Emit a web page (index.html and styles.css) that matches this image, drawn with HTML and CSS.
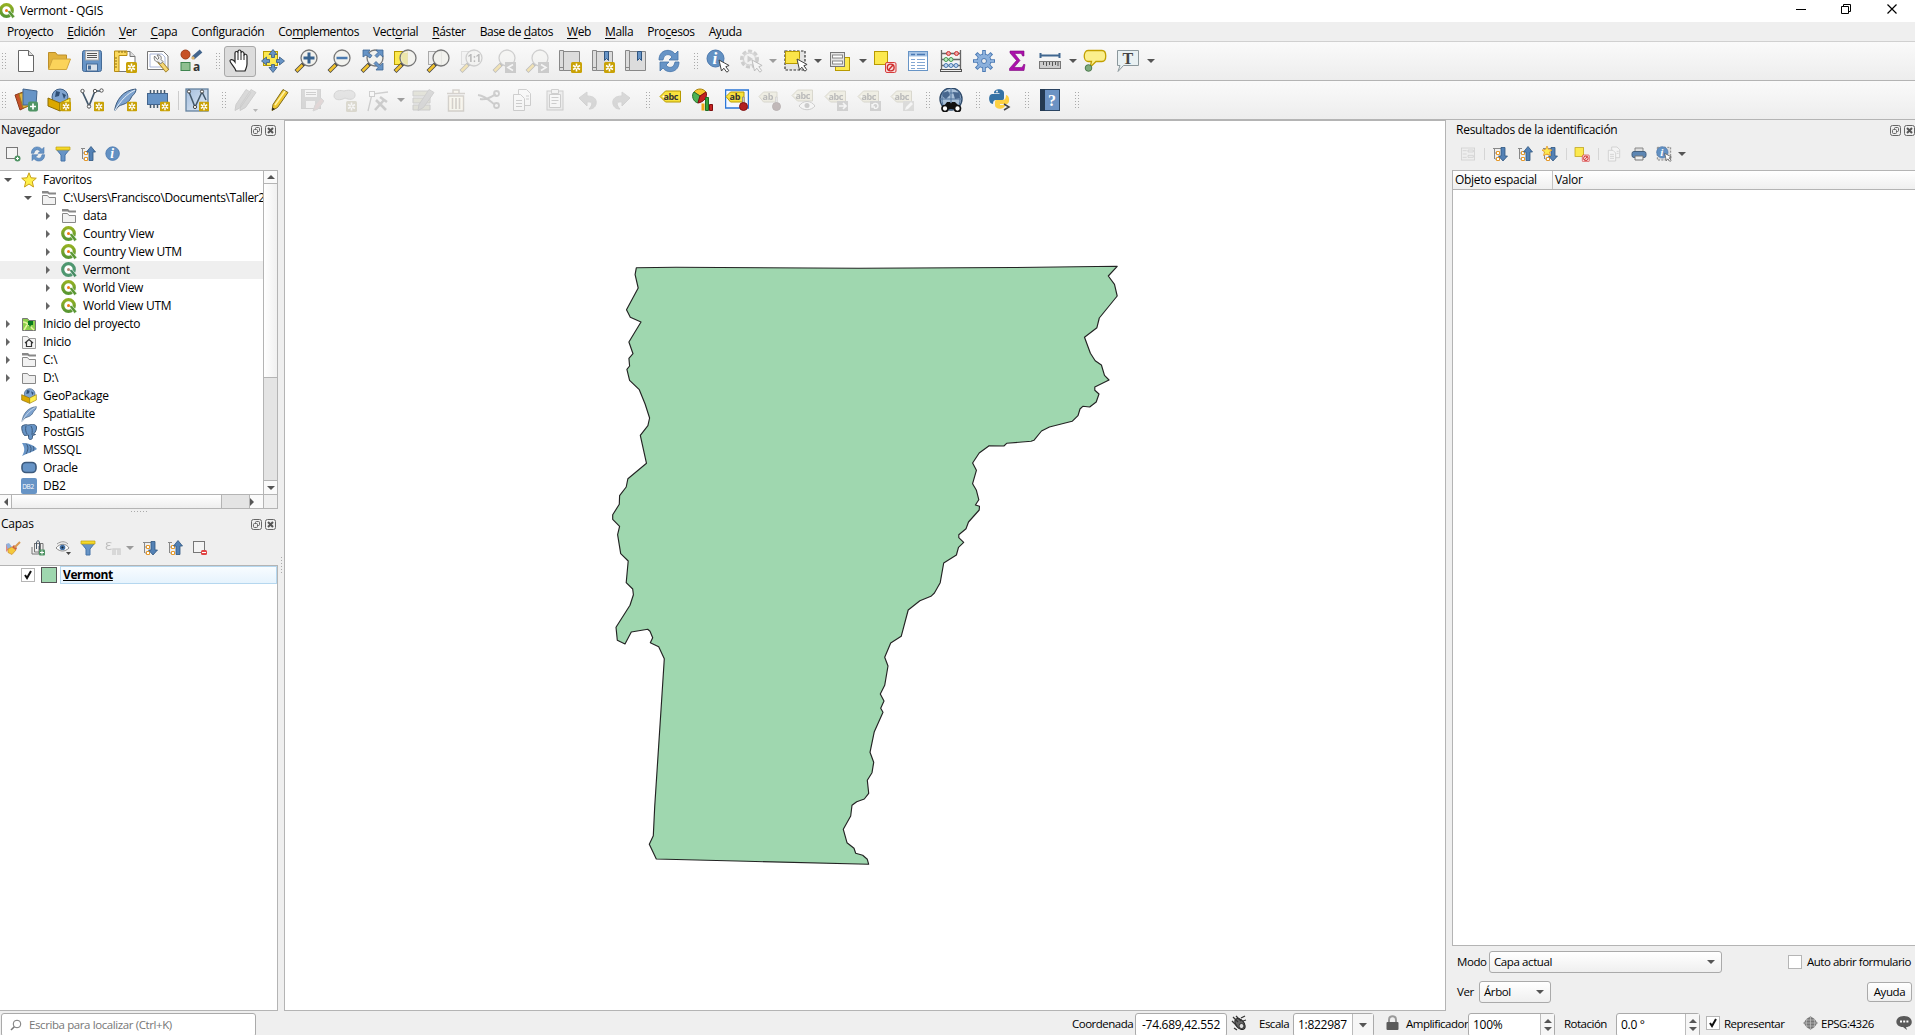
FILE: index.html
```html
<!DOCTYPE html>
<html lang="es">
<head>
<meta charset="utf-8">
<title>Vermont - QGIS</title>
<link rel="stylesheet" href="styles.css">
</head>
<body>
<svg class="defs" width="0" height="0">
<defs>
<linearGradient id="gBlue" x1="0" y1="0" x2="1" y2="1"><stop offset="0" stop-color="#a5bfdf"/><stop offset="1" stop-color="#dfe9f3"/></linearGradient>
<linearGradient id="gQ" x1="0" y1="0" x2="0" y2="1"><stop offset="0" stop-color="#93b023"/><stop offset="1" stop-color="#589632"/></linearGradient>
</defs>
<symbol id="badge" viewBox="0 0 11 11"><rect width="11" height="11" rx="1.5" fill="#c9a206"/><path d="M5.500 1.500v8M2 3.500l7 4M9 3.500l-7 4" stroke="#fff" stroke-width="1.600"/><circle cx="5.500" cy="5.500" r="1" fill="#c9a206"/></symbol>
<symbol id="glass" viewBox="0 0 24 24"><path d="M10 14.500L2 22.500" stroke="#444" stroke-width="4"/><path d="M8.500 16L2.500 22" stroke="#f2c32e" stroke-width="2.500"/><circle cx="15" cy="9" r="8" fill="#f1f1ec" fill-opacity=".85" stroke="#777" stroke-width="1.300"/></symbol>
<symbol id="cursor" viewBox="0 0 12 14"><path d="M1 1l2.500 11 2.300-2.800 3 4 2-1.500-3-4 3.300-1.200z" fill="#fff" stroke="#444"/></symbol>
<symbol id="dd" viewBox="0 0 8 5"><path d="M0 0h8L4 4.500z" fill="#555"/></symbol>
<symbol id="new" viewBox="0 0 24 24"><path d="M4.500 1.500h10l5 5v16h-15z" fill="#fff" stroke="#666"/><path d="M14.500 1.500v5h5" fill="#ddd" stroke="#666"/></symbol>
<symbol id="open" viewBox="0 0 24 24"><path d="M1.500 20V3.500h7l2 2.500h9v4" fill="#e2b33d" stroke="#bd8f2a"/><path d="M1.500 20.500l4-10.500h18l-4 10.500z" fill="#fbd35a" stroke="#d1a63c"/></symbol>
<symbol id="save" viewBox="0 0 24 24"><rect x="2.500" y="1.500" width="19" height="21" rx="2" fill="#6794c6" stroke="#456b97"/><rect x="5.500" y="2" width="13" height="9" fill="#f3f3f3" stroke="#aaa"/><path d="M7 4.500h10M7 6.500h10M7 8.500h10" stroke="#555"/><rect x="6.500" y="15" width="11" height="7" fill="#d9e1ea" stroke="#456b97"/><path d="M8 16.500h3v4H8z" fill="#456b97"/></symbol>
<symbol id="layout" viewBox="0 0 24 24"><path d="M5 2.500h12l5 5v15H5z" fill="#fff" stroke="#777"/><path d="M17 2.500v5h5" fill="#ddd" stroke="#777"/><path d="M1.500 2h12.500v4.500H6V22.500H1.500z" fill="#fbd95d" stroke="#b68b12"/><path d="M2 9h2M2 12h2M2 15h2M2 18h2M6 2v2M9 2v2M12 2v2" stroke="#8a6b10"/></symbol>
<symbol id="manager" viewBox="0 0 24 24"><path d="M1.500 2.500h16l4.500 4.500v13.500H1.500z" fill="#fff" stroke="#777"/><path d="M4 5h12l3 3v10H4z" fill="#fff" stroke="#a8b5d8"/><path d="M13 12l8.500 10" stroke="#9b7b1d" stroke-width="4.500"/><path d="M14.500 13.500l6.500 8" stroke="#f6d775" stroke-width="3"/><path d="M8.500 7c-1 4 1 6 4 6l2 2 2.500-2.500-2-2c1-3-1-5-4-4.500l2 3-1.500 1.500z" fill="#eee" stroke="#777"/></symbol>
<symbol id="style" viewBox="0 0 24 24"><circle cx="6.500" cy="5.500" r="4.500" fill="#c75227" stroke="#9d3d1a"/><path d="M14 9l8-7" stroke="#43658d" stroke-width="4"/><path d="M13 10l2-2" stroke="#deb66f" stroke-width="3"/><rect x="2" y="13.500" width="9" height="8" fill="#8fbf90" stroke="#408550"/><text x="14" y="22" font-family="Open Sans" font-size="12" fill="#333">a</text></symbol>
<symbol id="hand" viewBox="0 0 24 24"><path d="M8 22c-1-4-6-8-6-10s3-2 5 1V4c0-2 3-2 3 0V2.500c0-2 3-2 3 0V4c0-2 3-1.500 3 .5v2c0-2 3-1.500 3 .5v8c0 3-1 4-2 7z" fill="#fff" stroke="#222" stroke-width="1.200"/><path d="M10 4v7M13 4v7M16 6v5" stroke="#222"/></symbol>
<symbol id="pansel" viewBox="0 0 24 24"><rect x="2.500" y="2.500" width="14" height="14" fill="#fce94f" stroke="#b89a00"/><path d="M12 .5l4 5h-2.500v3h-3v-3H8zM23.500 12l-5 4v-2.500h-3v-3h3V8zM12 23.500l-4-5h2.500v-3h3v3H16zM.5 12l5-4v2.500h3v3h-3V16z" fill="#6794c6" stroke="#385a80" stroke-width=".8"/></symbol>
<symbol id="zin" viewBox="0 0 24 24"><use href="#glass"/><path d="M15 3.500v11M9.500 9h11" stroke="#38638f" stroke-width="3"/></symbol>
<symbol id="zout" viewBox="0 0 24 24"><use href="#glass"/><path d="M9.500 9h11" stroke="#4a7ab0" stroke-width="2.500"/></symbol>
<symbol id="zfull" viewBox="0 0 24 24"><use href="#glass"/><path d="M3 1h7L8 3.500l4 3-2 2.500-4-3L3 8zM23 1h-7l2 2.500-3 3 2 2 3-3L23 8zM23 21h-7l2-2.500-4-4 2-2 4 4 3-2.500z" fill="#6794c6" stroke="#3d6492" stroke-width=".8"/></symbol>
<symbol id="zsel" viewBox="0 0 24 24"><rect x="1.500" y="2.500" width="13" height="13" fill="#fce94f" stroke="#b89a00"/><use href="#glass"/><path d="M9 4h5.500v11.500C9 15 7 9 9 4z" fill="#e8e08d" opacity=".6"/></symbol>
<symbol id="zlay" viewBox="0 0 24 24"><rect x="2.500" y="2.500" width="13" height="13" fill="#eee" stroke="#aaa"/><use href="#glass"/></symbol>
<symbol id="znat" viewBox="0 0 24 24"><use href="#zlay"/><text x="8.500" y="13" font-family="Open Sans" font-weight="700" font-size="10" fill="#333">1:1</text></symbol>
<symbol id="zlast" viewBox="0 0 24 24"><use href="#glass"/><rect x="13" y="13" width="11" height="11" fill="#777"/><path d="M21 15.500l-5 3 5 3" fill="none" stroke="#fff" stroke-width="1.600"/></symbol>
<symbol id="znext" viewBox="0 0 24 24"><use href="#glass"/><rect x="13" y="13" width="11" height="11" fill="#777"/><path d="M16 15.500l5 3-5 3" fill="none" stroke="#fff" stroke-width="1.600"/></symbol>
<symbol id="map" viewBox="0 0 24 24"><path d="M1.500 1.500h4v20h-4zM5.500 2.500h16v19h-16z" fill="#dcdcdc" stroke="#888"/><path d="M1.500 18.500h4" stroke="#888"/></symbol>
<symbol id="bm" viewBox="0 0 24 24"><use href="#map"/><path d="M13.500 2.500h4v9l-2-2-2 2z" fill="#6794c6" stroke="#2f5580"/></symbol>
<symbol id="mapnew" viewBox="0 0 24 24"><use href="#map"/><use href="#badge" x="13" y="13" width="11" height="11"/></symbol>
<symbol id="bmnew" viewBox="0 0 24 24"><use href="#bm"/><use href="#badge" x="13" y="13" width="11" height="11"/></symbol>
<symbol id="refresh" viewBox="0 0 24 24"><path d="M2 11C2 0 14-1 18 5l3-3v9h-9l3-3C12 4 7 5 6 11zM22 13c0 11-12 12-16 6l-3 3v-9h9l-3 3c3 4 8 3 9-3z" fill="#6794c6" stroke="#4573a8" stroke-width=".8"/></symbol>
<symbol id="info" viewBox="0 0 24 24"><circle cx="9.500" cy="9.500" r="8.500" fill="#6391c3" stroke="#4a77ad"/><text x="6.500" y="15" font-family="Liberation Serif" font-style="italic" font-weight="700" font-size="17" fill="#fff">i</text></symbol>
<symbol id="identify" viewBox="0 0 24 24"><use href="#info"/><use href="#cursor" x="12" y="10" width="12" height="14"/></symbol>
<symbol id="gear" viewBox="0 0 24 24"><path d="M12 1v22M1 12h22M4.200 4.200l15.600 15.600M19.800 4.200L4.200 19.800" stroke="#4b7ab4" stroke-width="3.600"/><circle cx="12" cy="12" r="7" fill="#8bb0dc" stroke="#4b7ab4"/><path d="M12 2v20M2 12h20M5 5l14 14M19 5L5 19" stroke="#8bb0dc" stroke-width="2"/><circle cx="12" cy="12" r="2.500" fill="#eee" stroke="#4b7ab4"/></symbol>
<symbol id="action" viewBox="0 0 24 24"><circle cx="10.500" cy="10" r="8" fill="#ddd" stroke="#777" stroke-width="3" stroke-dasharray="4 2"/><circle cx="10.500" cy="10" r="6" fill="#eee" stroke="#777"/><path d="M8.500 6.500v7l5.500-3.500z" fill="#777"/><use href="#cursor" x="12" y="10" width="12" height="14"/></symbol>
<symbol id="select" viewBox="0 0 24 24"><rect x="1" y="2" width="20" height="19" fill="#e4e4e4" stroke="#333" stroke-width="1.200" stroke-dasharray="2.500 1.500"/><path d="M1.500 2.500h14v7l-2 5h-12z" fill="#fbe54a" stroke="#b89a00"/><use href="#cursor" x="12" y="9" width="12" height="14"/></symbol>
<symbol id="form" viewBox="0 0 24 24"><rect x="6.500" y="8.500" width="14" height="13" fill="#fce94f" stroke="#b89a00"/><rect x="1.500" y="3.500" width="14" height="14" fill="#e5e5e5" stroke="#777"/><rect x="3.500" y="6" width="10" height="3" fill="#fff" stroke="#888"/><rect x="3.500" y="12" width="10" height="3" fill="#fff" stroke="#888"/></symbol>
<symbol id="desel" viewBox="0 0 24 24"><rect x="1.500" y="2.500" width="13" height="13" fill="#fce94f" stroke="#b89a00"/><rect x="12.500" y="13.500" width="10.500" height="10" rx="1.500" fill="#f7dada" stroke="#d73c3c"/><circle cx="17.700" cy="18.500" r="3.400" fill="none" stroke="#cc2b2b" stroke-width="1.400"/><path d="M15.500 21l4.500-5" stroke="#cc2b2b" stroke-width="1.400"/></symbol>
<symbol id="table" viewBox="0 0 24 24"><rect x="2.500" y="2.500" width="19" height="19" fill="#fff" stroke="#6794c6"/><path d="M3 3h18v4.500H3z" fill="#a9c6e6"/><path d="M5 5.500h4M11 5.500h8" stroke="#4b7ab4" stroke-width="1.500"/><path d="M5 10.500h4M11 10.500h8M5 13.500h4M11 13.500h8M5 16.500h4M11 16.500h8M5 19.500h4M11 19.500h8" stroke="#83a7d2" stroke-width="1.200"/></symbol>
<symbol id="abacus" viewBox="0 0 24 24"><path d="M2 4.500h20M2 10.500h20M2 16.500h20M2.500 1v20M21.500 1v20" stroke="#666" stroke-width="1.300"/><rect x="1.500" y="20.500" width="21" height="2" fill="#eee" stroke="#555"/><g fill="#f0a3a3" stroke="#c33"><circle cx="9.500" cy="4.500" r="2"/><circle cx="17.500" cy="4.500" r="2"/></g><g fill="#b9ecc0" stroke="#4a9a56"><circle cx="7" cy="10.500" r="2"/><circle cx="12" cy="10.500" r="2"/></g><g fill="#c1d8f0" stroke="#4b7ab4"><circle cx="7" cy="16.500" r="2"/><circle cx="12" cy="16.500" r="2"/><circle cx="17" cy="16.500" r="2"/></g></symbol>
<symbol id="sigma" viewBox="0 0 24 24"><path d="M5 2h14v5h-1.500c-.5-2-1-2.500-3-2.500h-5l5.500 7-6 7h6c2 0 3-.5 3.500-3H20l-1 6H4.500v-2l7-8L5 4z" fill="#ab0fab" stroke="#7d077d" stroke-width=".6"/></symbol>
<symbol id="ruler" viewBox="0 0 24 24"><path d="M2 6.500h20M2.500 4v5M21.500 4v5" stroke="#3f668f" stroke-width="2"/><rect x="1.500" y="12.500" width="21" height="7" fill="#ccc" stroke="#777"/><path d="M5.500 13v3M8.500 13v4M11.500 13v3M14.500 13v4M17.500 13v3M20 13v4" stroke="#555"/></symbol>
<symbol id="tip" viewBox="0 0 24 24"><path d="M5 1.500h14c5 0 5 11 0 11h-6l-6 6 1.500-6H5c-5 0-5-11 0-11z" fill="#fbef8c" stroke="#c2a000" stroke-width="1.300"/><circle cx="5.500" cy="19" r="3.300" fill="#7fab7d" stroke="#4c7a4e"/></symbol>
<symbol id="tnote" viewBox="0 0 24 24"><path d="M1.500 1.500h21v15h-15L2 22.500l2-6H1.500z" fill="#e9f1f3" stroke="#8b989c"/><text x="6.500" y="14.500" font-family="Liberation Serif" font-weight="700" font-size="16" fill="#444">T</text></symbol>
<symbol id="ds" viewBox="0 0 24 24"><path d="M1 7l8-3 5 14-8 4z" fill="#c75227" stroke="#8c3c1e"/><path d="M5 6l9-3 4 14-9 3z" fill="#e2b541" stroke="#9f7a1c"/><path d="M9 1l14 2-1 14H9z" fill="#6794c6" stroke="#43658d"/><rect x="14" y="13.500" width="10" height="10" rx="2" fill="#4f9464"/><path d="M19 15.500v6M16 18.500h6" stroke="#fff" stroke-width="1.700"/></symbol>
<symbol id="gpkg" viewBox="0 0 24 24"><circle cx="13" cy="9" r="8" fill="#7fa4d0" stroke="#3e5f85"/><path d="M9 3l4 1-1 4-4 1zM15 5l4 2-2 4z" fill="#2f4f75"/><path d="M1 10l12 5v8L1 18z" fill="#dba800" stroke="#8d6d05"/><path d="M13 15l10-5v8l-10 5z" fill="#fff04f" stroke="#9f8105"/></symbol>
<symbol id="gpkgnew" viewBox="0 0 24 24"><use href="#gpkg"/><use href="#badge" x="14" y="13.500" width="10" height="10"/></symbol>
<symbol id="shp" viewBox="0 0 24 24"><path d="M2.500 4L9 18 15 3h7" fill="none" stroke="#43586b" stroke-width="1.700"/><g fill="#fff" stroke="#555"><circle cx="2.500" cy="3" r="1.700"/><circle cx="9" cy="18.500" r="1.700"/><circle cx="15" cy="3" r="1.700"/><circle cx="21.500" cy="2.500" r="1.700"/></g></symbol>
<symbol id="shpnew" viewBox="0 0 24 24"><use href="#shp"/><use href="#badge" x="14" y="13.500" width="10" height="10"/></symbol>
<symbol id="feather" viewBox="0 0 24 24"><path d="M1.500 23C3 12 10 2 23 1c0 5-4 6-5 9-3 6-8 6-12 8z" fill="#7ea3cf" stroke="#3c5a7d"/><path d="M1.500 23C8 12 14 6 22 2" fill="none" stroke="#e8f0f8"/></symbol>
<symbol id="featnew" viewBox="0 0 24 24"><use href="#feather"/><use href="#badge" x="14" y="13.500" width="10" height="10"/></symbol>
<symbol id="chip" viewBox="0 0 24 24"><path d="M4.500 2v18M8 2v18M11.500 2v18M15 2v18M18.500 2v18" stroke="#43586b" stroke-width="1.500"/><rect x="1.500" y="5.500" width="20" height="11" fill="#6794c6" stroke="#43658d"/><use href="#badge" x="14" y="13.500" width="10" height="10"/></symbol>
<symbol id="virt" viewBox="0 0 24 24"><rect x="1" y="1" width="22" height="22" fill="url(#gBlue)" stroke="#64829f" stroke-width="1.300"/><path d="M4 4l6 15 7-15 4 8" fill="none" stroke="#43586b" stroke-width="1.500"/><g fill="#fff" stroke="#444"><circle cx="4" cy="3.500" r="1.600"/><circle cx="10" cy="19" r="1.600"/><circle cx="17" cy="3.500" r="1.600"/></g><use href="#badge" x="14" y="13.500" width="10" height="10"/></symbol>
<symbol id="pencil" viewBox="0 0 24 24"><path d="M5 22.500l1-6L16 1.500l5 3L10.500 19.500z" fill="#f0c830" stroke="#7d6a1c"/><path d="M8 17L18 3" stroke="#fff3a8" stroke-width="1.500"/><path d="M5 22.500l.5-3 2.500 1.500z" fill="#222"/></symbol>
<symbol id="gpencil" viewBox="0 0 24 24"><path d="M5 22.500l1-6L16 1.500l5 3L10.500 19.500z" fill="#999" stroke="#777"/></symbol>
<symbol id="saveed" viewBox="0 0 24 24"><rect x="1.500" y="1.500" width="19" height="19" fill="#999" stroke="#888"/><rect x="5" y="2" width="12" height="7" fill="#f3f3f3"/><path d="M6 4.500h10M6 6.500h10" stroke="#777"/><rect x="6" y="13" width="9" height="7" fill="#eee"/><path d="M13 23l2-6 6-7 3 3-6 8z" fill="#b99" stroke="#999"/></symbol>
<symbol id="addfeat" viewBox="0 0 24 24"><path d="M1 8c0-6 7-6 10-5 6-2 12 0 11 5-1 4-6 4-10 2-5 3-11 2-11-2z" fill="#bbb" stroke="#888"/><use href="#badge" x="13" y="13" width="11" height="11"/></symbol>
<symbol id="vertex" viewBox="0 0 24 24"><path d="M2 23L6 6l16-2" fill="none" stroke="#777" stroke-width="1.300"/><rect x="3.500" y="3.500" width="5" height="5" fill="#fff" stroke="#777"/><path d="M9 22l9-10M10 12l10 10M14 9l7 5" stroke="#777" stroke-width="2.600"/></symbol>
<symbol id="multi" viewBox="0 0 24 24"><path d="M2 3h17v5H2zM2 10h17v5H2zM2 17h17v5H2z" fill="#b9b99c" stroke="#777"/><use href="#gpencil" x="2"/></symbol>
<symbol id="trash" viewBox="0 0 24 24"><path d="M4.500 8h15v15h-15zM3 5.500h18M9 5V2h6v3" fill="#eee" stroke="#777" stroke-width="1.500"/><path d="M8.500 10v11M12 10v11M15.500 10v11" stroke="#777" stroke-width="1.700"/></symbol>
<symbol id="cut" viewBox="0 0 24 24"><path d="M1 7c7 1 11 5 16 9M3 11c7 1 11-2 16-5" fill="none" stroke="#777" stroke-width="2"/><circle cx="19.500" cy="5.500" r="2.500" fill="none" stroke="#777" stroke-width="1.800"/><circle cx="19.500" cy="17.500" r="2.500" fill="none" stroke="#777" stroke-width="1.800"/></symbol>
<symbol id="copy" viewBox="0 0 24 24"><path d="M8.500 1.500h8l4 4v12h-12z" fill="#fff" stroke="#777"/><path d="M3.500 6.500h7l4 4v12h-11z" fill="#fff" stroke="#777"/><path d="M6 12.500h6M6 15.500h6M6 18.500h6M16 8h3M16 11h3" stroke="#777"/></symbol>
<symbol id="paste" viewBox="0 0 24 24"><rect x="4" y="3" width="16" height="19" fill="#ddd" stroke="#777"/><path d="M6.500 6.500h11v13h-11z" fill="#fff" stroke="#777"/><path d="M8.500 1.500h7v4h-7z" fill="#eee" stroke="#777"/><path d="M8.500 9.500h7M8.500 12.500h7M8.500 15.500h5" stroke="#777"/></symbol>
<symbol id="undo" viewBox="0 0 24 24"><path d="M3 10l8-6v4c7 0 10 3 9 8-1 4-4 5-7 5 4-4 4-8-2-7v4z" fill="#999" stroke="#888"/></symbol>
<symbol id="tag" viewBox="0 0 24 24"><path d="M1 9.500L6.500 4h15v11h-15z" fill="#f8e23c" stroke="#b79a00"/><circle cx="4.500" cy="9.500" r="1" fill="#fff"/></symbol>
<symbol id="abc" viewBox="0 0 24 24"><use href="#tag"/><text x="4.500" y="13" font-family="Open Sans" font-weight="700" font-size="9" letter-spacing="-.4" fill="#333">abc</text></symbol>
<symbol id="chart" viewBox="0 0 24 24"><path d="M8 8L2 4c3-4 9-4 12 0z" fill="#f6c62c" stroke="#a8840d"/><path d="M8 8L2 4c-3 3-1 10 4 11z" fill="#4eb254" stroke="#22702a"/><path d="M8 8l6-4c2 5-2 10-8 11z" fill="#c42222" stroke="#7e0f0f"/><path d="M9.500 15.500h3v7h-3z" fill="#f0a818"/><path d="M13.500 9.500h3v13h-3z" fill="#37a33d" stroke="#1f6e25"/><path d="M17.500 16.500h3v6h-3z" fill="#c42222" stroke="#7e0f0f"/></symbol>
<symbol id="pin" viewBox="0 0 24 24"><path d="M1 8.500L5.500 4H19v10H5.500z" fill="#f8e23c" stroke="#b79a00"/><text x="4.500" y="12" font-family="Open Sans" font-weight="700" font-size="9" fill="#333">ab</text><path d="M17.500 9h1.500v9h-1.500z" fill="#eee" stroke="#777" stroke-width=".7"/><circle cx="18.500" cy="18.500" r="4" fill="#b32020" stroke="#7f1515"/></symbol>
<symbol id="lpin" viewBox="0 0 24 24"><rect x=".5" y="2" width="23" height="18" fill="#f4f8ff" stroke="#2a76d8" stroke-width="1.500"/><use href="#pin"/></symbol>
<symbol id="leye" viewBox="0 0 24 24"><use href="#abc" y="-2"/><path d="M8 18c4-6 12-6 16 0-4 5-12 5-16 0z" fill="#fff" stroke="#777"/><circle cx="16" cy="17.500" r="2.500" fill="#777"/></symbol>
<symbol id="lmove" viewBox="0 0 24 24"><use href="#abc" y="-1"/><rect x="13" y="13" width="11" height="10" fill="#888"/><path d="M15 18h7M19 15l3 3-3 3" fill="none" stroke="#fff" stroke-width="1.700"/></symbol>
<symbol id="lrot" viewBox="0 0 24 24"><use href="#abc" y="-1"/><rect x="13" y="13" width="11" height="10" fill="#888"/><path d="M16 18c-1-3 5-4 5 0 0 2-2 3-4 2M15 16v3h3" fill="none" stroke="#fff" stroke-width="1.400"/></symbol>
<symbol id="ledit" viewBox="0 0 24 24"><use href="#abc" y="-1"/><rect x="13" y="13" width="11" height="10" fill="#aa9"/><path d="M15 22l1-3 5-5 2 2-5 5z" fill="#fff"/></symbol>
<symbol id="meta" viewBox="0 0 24 24"><circle cx="12" cy="11" r="11" fill="#a9c0d8" stroke="#2f4a6a" stroke-width="1.400"/><path d="M1 11h22M12 0v22M3 5h18M6 1c-4 6-4 14 0 20M18 1c4 6 4 14 0 20" fill="none" stroke="#4f729b"/><path d="M4 5l5-2 2 4-4 4-3-2zM14 4l6 1 1 5-5 1z" fill="#48678e"/><path d="M5 18l3-4h3l1 1.500 1-1.500h3l4 4v3H5z" fill="#111"/><circle cx="6" cy="20.500" r="3" fill="#fff" stroke="#111" stroke-width="1.700"/><circle cx="18.500" cy="20.500" r="3" fill="#fff" stroke="#111" stroke-width="1.700"/></symbol>
<symbol id="py" viewBox="0 0 24 24"><path d="M6 5c0-5 10-5 10 0v5c0 2-1 2-3 2H8c-2 0-3 1-3 4C0 16 0 6 4 6h7.500v-.700H6z" fill="#3572a5"/><path d="M17 17c0 5-10 5-10 0v-3c0-2 1-2 3-2h5c2 0 3-2 3-5 4 0 4 9 1 9h-7v1z" fill="#fdd143"/><circle cx="9" cy="3.500" r=".9" fill="#fff"/><path d="M16 16l5 3-5 3" fill="none" stroke="#444" stroke-width="1.500"/></symbol>
<symbol id="help" viewBox="0 0 24 24"><rect x="2.500" y="1.500" width="19" height="21" fill="#6c93c4" stroke="#2b4563"/><path d="M2 1h5v22H2z" fill="#243a52"/><text x="10" y="17.500" font-family="Liberation Serif" font-size="16" fill="#fff">?</text></symbol>
<symbol id="float" viewBox="0 0 11 11"><rect x=".5" y=".5" width="10" height="10" rx="2" fill="none" stroke="#666"/><rect x="4.500" y="2.500" width="4" height="4" rx="1" fill="none" stroke="#666"/><rect x="2.500" y="4.500" width="4" height="4" rx="1" fill="#eee" stroke="#666"/></symbol>
<symbol id="close" viewBox="0 0 11 11"><rect x=".5" y=".5" width="10" height="10" rx="2" fill="none" stroke="#666"/><path d="M3 3l5 5M8 3L3 8" stroke="#555" stroke-width="2"/></symbol>
<symbol id="addl" viewBox="0 0 16 16"><rect x="1.500" y="1.500" width="11" height="11" fill="#f4f4f4" stroke="#777"/><circle cx="12.500" cy="12.500" r="3" fill="#4f9464"/><path d="M12.500 11v3M11 12.500h3" stroke="#fff"/></symbol>
<symbol id="reml" viewBox="0 0 16 16"><rect x="1.500" y="1.500" width="11" height="11" fill="#f4f4f4" stroke="#777"/><rect x="9" y="10" width="6" height="5" rx="1.500" fill="#e04444"/><path d="M10 12.500h4" stroke="#fff"/></symbol>
<symbol id="funnel" viewBox="0 0 16 16"><path d="M1.500 3.500h13L10 9v6H6V9z" fill="#6794c6" stroke="#4573a8"/><path d="M1 1h14v3H1z" fill="#f5d929" stroke="#c0a010" stroke-width=".7"/></symbol>
<symbol id="coll" viewBox="0 0 16 16"><path d="M1 2.500h4M2.500 2v11M3 7h3M3 13h3" stroke="#888"/><path d="M4.500 5.500h3v3h-3zM4.500 11.500h3v3h-3z" fill="#fff" stroke="#e5992b"/><path d="M11 .5L15.500 6H13v8.500H9V6H6.500z" fill="#5381b5" stroke="#2f5580" stroke-width=".8"/></symbol>
<symbol id="exp" viewBox="0 0 16 16"><path d="M1 2.500h8M2.500 2v11M3 7h3M3 13h3" stroke="#888"/><path d="M4.500 5.500h3v3h-3zM4.500 11.500h3v3h-3z" fill="#fff" stroke="#e5992b"/><path d="M11 15L15.500 10H13V1.500H9V10H6.500z" fill="#5381b5" stroke="#2f5580" stroke-width=".8"/></symbol>
<symbol id="expnew" viewBox="0 0 16 16"><use href="#exp"/><path d="M5 0l1.500 3.500L10 4 7.500 6 8.500 9.500 5 8 1.500 9.500l1-3.500L0 4l3.500-.5z" fill="#fce94f" stroke="#e5992b" stroke-width=".8"/></symbol>
<symbol id="brush" viewBox="0 0 16 16"><path d="M1 4l5 3-5 5z" fill="#d88"/><path d="M1 4l3-1 3 4-4 3z" fill="#8fb0dc"/><path d="M3 9l4-2 4 3-4 4.500-4-2z" fill="#f4c93c" stroke="#cf8b25" stroke-width=".7"/><path d="M7 7l2-2 3 3-1 2z" fill="#d05a38"/><path d="M9.500 7.500L15 2" stroke="#d99a52" stroke-width="2"/></symbol>
<symbol id="group" viewBox="0 0 16 16"><path d="M4 3.500h9v10M2 7v7h7V6M4.500 4v8h6V4" fill="none" stroke="#777"/><path d="M6.500 9V3c0-3 3-3 3 0v7" fill="none" stroke="#456"/><rect x="9" y="9.500" width="6" height="6" rx="1" fill="#4f9464"/><path d="M12 10.500v4M10 12.500h4" stroke="#fff"/></symbol>
<symbol id="eye" viewBox="0 0 16 16"><path d="M1 8c4-5 10-5 13 0-4 4-9 4-13 0z" fill="#fff" stroke="#888"/><circle cx="7.500" cy="7.500" r="2.800" fill="#4573a8"/><circle cx="7.500" cy="7.500" r="1" fill="#123"/><path d="M2 4c4-3 8-3 11 0" fill="none" stroke="#999"/><path d="M11 12h5l-2.500 3z" fill="#444"/></symbol>
<symbol id="eps" viewBox="0 0 16 16"><text x="0" y="10" font-family="Open Sans" font-size="15" fill="#666">ε</text><path d="M8 15V9h2v6M13 15V9h2v6M9 9h5" fill="none" stroke="#999" stroke-width="1.500"/></symbol>
<symbol id="printer" viewBox="0 0 16 16"><path d="M4 2h8v5H4z" fill="#ddd" stroke="#888"/><rect x="1" y="5.500" width="14" height="6" rx="2" fill="#5d86b3" stroke="#45617f"/><path d="M4 10h8v4H4z" fill="#eee" stroke="#777"/></symbol>
<symbol id="star" viewBox="0 0 16 16"><path d="M8 .8l2 5 5.300.4-4 3.500 1.200 5.300L8 12l-4.500 3 1.200-5.300-4-3.500L6 5.800z" fill="#fff04a" stroke="#c79f18"/></symbol>
<symbol id="folder" viewBox="0 0 16 16"><path d="M1.500 3.500h5l1.500 2h6.500v8h-13z" fill="#eee" stroke="#888"/></symbol>
<symbol id="foldero" viewBox="0 0 16 16"><path d="M1 1h6l1.500 1.500H15v2H8L6.500 3.500H1z" fill="#888"/><path d="M1.500 5.500h5l1.500 2h6.500v7h-13z" fill="#f2f2f2" stroke="#888"/></symbol>
<symbol id="q" viewBox="0 0 16 16"><circle cx="7.500" cy="7.500" r="5.800" fill="#fff" stroke="url(#gQ)" stroke-width="3.200"/><path d="M8 8l3-.5 5 6-2.500 2z" fill="#589632" stroke="#fff" stroke-width=".6"/><circle cx="7.500" cy="7.500" r="1.500" fill="#ee7913"/></symbol>
<symbol id="qv" viewBox="0 0 16 16"><circle cx="7.500" cy="7.500" r="5.800" fill="#fff" stroke="#4f9770" stroke-width="3.200"/><path d="M8 8l3-.5 5 6-2.500 2z" fill="#458a62" stroke="#fff" stroke-width=".6"/><circle cx="7.500" cy="7.500" r="1.500" fill="#b28673"/></symbol>
<symbol id="phome" viewBox="0 0 16 16"><path d="M1.500 2.500h5l1.500 2h6.500v10h-13z" fill="#8cd04b" stroke="#777"/><path d="M2 6c5 0 6 4 11 8M3 14L6 9" fill="none" stroke="#e6f5a0" stroke-width="1.500"/><path d="M7 5h5v4h-2l-1 3-1-3H7z" fill="#087a1c"/></symbol>
<symbol id="home" viewBox="0 0 16 16"><path d="M1.500 2.500h5l1.500 2h6.500v10h-13z" fill="#f4f4f4" stroke="#999"/><path d="M4 9l4-3.500L12 9M5.500 8v4.500h5V8" fill="none" stroke="#333" stroke-width="1.200"/></symbol>
<symbol id="pg" viewBox="0 0 16 16"><path d="M1 2c3-2 5-1 7-1 3-1 7-1 7.500 2 .2 3-1 5-3 7l2 .5-3 1v2c-.5 3-4 2.500-4 0V11l-4 .500C2 10 0 5 1 2z" fill="#6794c6" stroke="#3c5a7d"/><path d="M5 2c-1 4 0 6 1 8M10 2c2 3 1 6 1 9" fill="none" stroke="#3c5a7d"/></symbol>
<symbol id="ms" viewBox="0 0 16 16"><path d="M1 1c5 0 11 1 15 6-4 3-9 4-15 7 3-5 3-8 0-13z" fill="#6794c6"/><path d="M5 1.500c3 3 2 7 0 10.500M8.500 3c2 2 2 5 .5 7.500M12 4c1 2 1 3 0 5" fill="none" stroke="#3c5a7d"/></symbol>
<symbol id="ora" viewBox="0 0 16 16"><rect x="1" y="2.500" width="14" height="10" rx="4" fill="#6794c6" stroke="#3c5a7d" stroke-width="1.600"/></symbol>
<symbol id="db2" viewBox="0 0 16 16"><rect width="16" height="16" rx="2" fill="#6794c6"/><text x="1.200" y="10.500" font-family="Open Sans" font-size="6.500" fill="#fff">DB2</text></symbol>
<symbol id="chk" viewBox="0 0 14 14"><rect x=".5" y=".5" width="13" height="13" fill="#fff" stroke="#b5b5b5"/><path d="M4 7l2 3 4-7" fill="none" stroke="#111" stroke-width="2"/></symbol>
</svg>

<header class="titlebar"><svg class="i16"><use href="#q"/></svg><span class="title">Vermont - QGIS</span>
<svg class="winctl" viewBox="0 0 103 12"><path d="M0 6.500h10" stroke="#000"/><path d="M45.500 3.500h7v7h-7zM47.500 3.500v-2h7v7h-2" fill="none" stroke="#000"/><path d="M91.500 1.500l9 9M100.500 1.500l-9 9" stroke="#000" stroke-width="1.200"/></svg></header>
<nav class="menubar"><span>Pro<u>y</u>ecto</span><span><u>E</u>dición</span><span><u>V</u>er</span><span><u>C</u>apa</span><span>Confi<u>g</u>uración</span><span>Co<u>m</u>plementos</span><span>Vect<u>o</u>rial</span><span><u>R</u>áster</span><span>Base de <u>d</u>atos</span><span><u>W</u>eb</span><span><u>M</u>alla</span><span>Pro<u>c</u>esos</span><span>A<u>y</u>uda</span></nav>

<div class="toolbar">
<i class="grip first"></i>
<b><svg><use href="#new"/></svg></b><b><svg><use href="#open"/></svg></b><b><svg><use href="#save"/></svg></b><b><svg><use href="#layout"/><use href="#badge" x="13" y="13" width="11" height="11"/></svg></b><b><svg><use href="#manager"/></svg></b><b><svg><use href="#style"/></svg></b>
<i class="grip"></i>
<b class="on"><svg><use href="#hand"/></svg></b><b><svg><use href="#pansel"/></svg></b><b><svg><use href="#zin"/></svg></b><b><svg><use href="#zout"/></svg></b><b><svg><use href="#zfull"/></svg></b><b><svg><use href="#zsel"/></svg></b><b><svg><use href="#zlay"/></svg></b><b class="off"><svg><use href="#znat"/></svg></b><b class="off"><svg><use href="#zlast"/></svg></b><b class="off"><svg><use href="#znext"/></svg></b><b><svg><use href="#mapnew"/></svg></b><b><svg><use href="#bmnew"/></svg></b><b><svg><use href="#bm"/></svg></b><b><svg><use href="#refresh"/></svg></b>
<i class="grip"></i>
<b><svg><use href="#identify"/></svg></b><b class="off"><svg><use href="#action"/></svg></b><i class="drop dim"></i>
<b><svg><use href="#select"/></svg></b><i class="drop"></i><b><svg><use href="#form"/></svg></b><i class="drop"></i>
<b><svg><use href="#desel"/></svg></b><b><svg><use href="#table"/></svg></b><b><svg><use href="#abacus"/></svg></b><b><svg><use href="#gear"/></svg></b><b><svg><use href="#sigma"/></svg></b><b><svg><use href="#ruler"/></svg></b><i class="drop"></i>
<b><svg><use href="#tip"/></svg></b><b><svg><use href="#tnote"/></svg></b><i class="drop"></i>
</div>
<div class="toolbar edit">
<i class="grip first"></i>
<b><svg><use href="#ds"/></svg></b><b><svg><use href="#gpkgnew"/></svg></b><b><svg><use href="#shpnew"/></svg></b><b><svg><use href="#featnew"/></svg></b><b><svg><use href="#chip"/></svg></b>
<i class="sep"></i><b><svg><use href="#virt"/></svg></b>
<i class="grip"></i>
<b class="off"><svg><path d="M1 22.500l1-6L12 1.500l5 3L6.500 19.500zM6 22.500l1-6L17 1.500l5 3L11.500 19.500z" fill="#999" stroke="#777"/><path d="M19 21h5l-2.500 3z" fill="#333"/></svg></b><b><svg><use href="#pencil"/></svg></b><b class="off"><svg><use href="#saveed"/></svg></b><b class="off gray"><svg><use href="#addfeat"/></svg></b><b class="off"><svg><use href="#vertex"/></svg></b><i class="drop dim"></i>
<b class="off"><svg><use href="#multi"/></svg></b><b class="off warm"><svg><use href="#trash"/></svg></b><b class="off"><svg><use href="#cut"/></svg></b><b class="off"><svg><use href="#copy"/></svg></b><b class="off"><svg><use href="#paste"/></svg></b><b class="off"><svg><use href="#undo"/></svg></b><b class="off flip"><svg><use href="#undo"/></svg></b>
<i class="grip"></i>
<b><svg><use href="#abc" y="-1"/></svg></b><b><svg><use href="#chart"/></svg></b><b><svg><use href="#lpin"/></svg></b><b class="off gray"><svg><use href="#pin"/></svg></b><b class="off gray"><svg><use href="#leye"/></svg></b><b class="off gray"><svg><use href="#lmove"/></svg></b><b class="off gray"><svg><use href="#lrot"/></svg></b><b class="off gray"><svg><use href="#ledit"/></svg></b>
<i class="grip"></i><b><svg><use href="#meta"/></svg></b><i class="grip"></i><b><svg><use href="#py"/></svg></b><i class="grip"></i><b><svg><use href="#help"/></svg></b><i class="grip"></i>
</div>

<main class="work">
<aside class="left">
<div class="dockhead"><span>Navegador</span><svg><use href="#float"/></svg><svg><use href="#close"/></svg></div>
<div class="docktools"><svg class="i16"><use href="#addl"/></svg><svg class="i16" viewBox="0 0 24 24"><use href="#refresh"/></svg><svg class="i16"><use href="#funnel"/></svg><svg class="i16"><use href="#coll"/></svg><svg class="i16" viewBox="0 0 20 20"><use href="#info" width="24" height="24"/></svg></div>
<div class="browser">
<div class="rows">
<div class="row"><i class="arr down"></i><svg class="i16"><use href="#star"/></svg><span>Favoritos</span></div>
<div class="row l1"><i class="arr down"></i><svg class="i16"><use href="#foldero"/></svg><span class="path">C:\Users\Francisco\Documents\Taller2</span></div>
<div class="row l2"><i class="arr"></i><svg class="i16"><use href="#foldero"/></svg><span>data</span></div>
<div class="row l2"><i class="arr"></i><svg class="i16"><use href="#q"/></svg><span>Country View</span></div>
<div class="row l2"><i class="arr"></i><svg class="i16"><use href="#q"/></svg><span>Country View UTM</span></div>
<div class="row l2 cur"><i class="arr"></i><svg class="i16"><use href="#qv"/></svg><span>Vermont</span></div>
<div class="row l2"><i class="arr"></i><svg class="i16"><use href="#q"/></svg><span>World View</span></div>
<div class="row l2"><i class="arr"></i><svg class="i16"><use href="#q"/></svg><span>World View UTM</span></div>
<div class="row"><i class="arr"></i><svg class="i16"><use href="#phome"/></svg><span>Inicio del proyecto</span></div>
<div class="row"><i class="arr"></i><svg class="i16"><use href="#home"/></svg><span>Inicio</span></div>
<div class="row"><i class="arr"></i><svg class="i16"><use href="#foldero"/></svg><span>C:\</span></div>
<div class="row"><i class="arr"></i><svg class="i16"><use href="#folder"/></svg><span>D:\</span></div>
<div class="row"><i class="arr none"></i><svg class="i16"><use href="#gpkg"/></svg><span>GeoPackage</span></div>
<div class="row"><i class="arr none"></i><svg class="i16"><use href="#feather"/></svg><span>SpatiaLite</span></div>
<div class="row"><i class="arr none"></i><svg class="i16"><use href="#pg"/></svg><span>PostGIS</span></div>
<div class="row"><i class="arr none"></i><svg class="i16"><use href="#ms"/></svg><span>MSSQL</span></div>
<div class="row"><i class="arr none"></i><svg class="i16"><use href="#ora"/></svg><span>Oracle</span></div>
<div class="row"><i class="arr none"></i><svg class="i16"><use href="#db2"/></svg><span>DB2</span></div>
</div>
<div class="vbar"><i class="btn"><i class="tri up"></i></i><i class="thumb"></i><i class="trough"></i><i class="btn"><i class="tri down"></i></i></div>
<div class="hbar"><i class="btn"><i class="tri left"></i></i><i class="thumb"></i><i class="trough"></i><i class="btn"><i class="tri right"></i></i></div>
<div class="corner"></div>
</div>
<div class="split"><i></i></div>
<div class="dockhead second"><span>Capas</span><svg><use href="#float"/></svg><svg><use href="#close"/></svg></div>
<div class="docktools second"><svg class="i16"><use href="#brush"/></svg><svg class="i16"><use href="#group"/></svg><svg class="i16"><use href="#eye"/></svg><svg class="i16"><use href="#funnel"/></svg><svg class="i16 faint"><use href="#eps"/></svg><i class="drop dim"></i><svg class="i16"><use href="#exp"/></svg><svg class="i16"><use href="#coll"/></svg><svg class="i16"><use href="#reml"/></svg></div>
<div class="layers"><div class="layer"><svg class="chk"><use href="#chk"/></svg><i class="swatch"></i><span>Vermont</span></div></div>
</aside>
<div class="vsplit"><i></i></div>
<section class="canvas">
<svg viewBox="285 121 1160 889"><path fill="#9fd7af" stroke="#232323" stroke-width="1.150" stroke-linejoin="round" d="M636.300 267.800L676 267.300 858.600 268.300 1014 267.500 1117.200 266.300 1108.300 276 1114.500 284.300 1117.200 296 1099.300 318 1096.900 327.700 1084.500 337.300 1090.400 353.300 1095.200 360.700 1101.400 365 1104.500 375.300 1109 380 1094.800 387V390.300L1099 394 1096.200 402 1089.700 407 1082.800 406.300 1080 409 1078 415.700 1072.100 421.300 1049.400 427 1041.500 431 1033.900 440.300 1031.100 441.300 1006.700 443.300 1003.900 446 989.100 445.700 979.200 453 972.600 463 976.400 470.300 972.600 483.700 976.400 490.300 978.800 499.700 975.400 505 979.500 506.300 979.200 510 968.500 522 966 528.700 958.800 534.700V537.700L963.700 542.300 958.500 547.300 956.400 555 943.700 563 940.200 582.700 934.400 593 930.900 596.300 919.900 600.700 908.200 610 901.200 636.300 890.700 643 884.700 657.300 888 666 884.700 685.300 880.300 694 884 701 880.700 708.300 883 712.300 874.300 731.700 870 752.300 873.700 762.300 872 772.700 867.300 780.300 868.700 793.300 864.300 799 856.700 801.700 852 805.300 850.700 816 843.300 829.300 847 842.700 854 848.300 855.700 853.300 862.700 855.300 867.300 859.300 868.700 864.300 746.700 861.300 656.300 859 649.300 844.300 653.300 835.700 654.700 806.700 661 710 664.300 658.700 658.700 646.700 650.300 642.700 652.700 637.700 650 631.300 647.700 629.300 631.300 632 625 644 617.300 640.300 616 627.300 630 605.300 633.400 594.700 632.700 589 626.200 582.700 628.200 561 620.700 553.700 617.600 534.700 619.600 526.300 612.700 519.300V514.700L619.300 504.300 619.600 495.700 626.200 487 627.900 478.700 646.500 463.300 640.300 435.300 647.900 425.700 649.600 418 645.100 404 639.300 389.700 629.600 380.300 626.900 369.300 629.600 366 628.900 358.300 633 353.700 628.900 342 641 322 630.300 317.300 626.500 309.700 638.200 288 635.100 274.700z"/></svg>
</section>
<aside class="right">
<div class="dockhead"><span>Resultados de la identificación</span><svg><use href="#float"/></svg><svg><use href="#close"/></svg></div>
<div class="docktools"><svg class="i16 faint" viewBox="0 0 24 24"><rect x="2" y="3" width="20" height="18" fill="#eee" stroke="#888"/><path d="M4 7h6M4 12h6M4 17h6M12 6h8v3h-8zM12 14h8v3h-8z" fill="none" stroke="#888"/></svg><i class="tsep"></i><svg class="i16"><use href="#exp"/></svg><svg class="i16"><use href="#coll"/></svg><svg class="i16"><use href="#expnew"/></svg><i class="tsep"></i><svg class="i16" viewBox="0 0 24 24"><use href="#desel"/></svg><i class="tsep"></i><svg class="i16 faint" viewBox="0 0 24 24"><use href="#copy"/></svg><svg class="i16"><use href="#printer"/></svg><svg class="i16" viewBox="0 0 24 24"><rect x="2" y="2" width="20" height="19" fill="#ddd" stroke="#888" stroke-width="1.500" stroke-dasharray="3 2"/><use href="#identify"/></svg><i class="drop"></i></div>
<div class="results"><div class="cols"><span>Objeto espacial</span><span>Valor</span></div></div>
<div class="opts"><label>Modo</label><div class="combo mode">Capa actual<i></i></div><i class="box"></i><span class="auto">Auto abrir formulario</span></div>
<div class="opts two"><label>Ver</label><div class="combo view">Árbol<i></i></div><button>Ayuda</button></div>
</aside>
</main>

<footer class="status">
<div class="field locate"><svg viewBox="0 0 12 12"><circle cx="7" cy="5" r="3.800" fill="none" stroke="#777"/><path d="M4.300 7.700L1 11" stroke="#777" stroke-width="1.500"/></svg><span>Escriba para localizar (Ctrl+K)</span></div>
<span class="t coord">Coordenada</span><div class="field fcoord">-74.689,42.552</div>
<svg class="i16 mouse" viewBox="0 0 16 16"><ellipse cx="9" cy="9" rx="4" ry="6.500" transform="rotate(-40 9 9)" fill="#666" stroke="#222"/><path d="M2 2l5 5M5 1l5 5M1 6l5 5M10 3l4-2M12 6l3-1M3 13l3 2" stroke="#333" stroke-width="1.300"/><circle cx="10.500" cy="11" r="2.500" fill="#ddd" stroke="#333"/></svg>
<span class="t esc">Escala</span><div class="field fesc">1:822987<i><svg width="8" height="5"><use href="#dd"/></svg></i></div>
<svg class="lock" viewBox="0 0 13 16"><path d="M3 8V5c0-5 7-5 7 0v3" fill="none" stroke="#999" stroke-width="2"/><rect x=".5" y="7" width="12" height="8" rx="1" fill="#5a5a5a"/></svg>
<span class="t amp">Amplificador</span><div class="field famp">100%<i><em class="tri up"></em><em class="tri down"></em></i></div>
<span class="t rot">Rotación</span><div class="field frot">0.0 °<i><em class="tri up"></em><em class="tri down"></em></i></div>
<svg class="chk rchk"><use href="#chk"/></svg><span class="t rep">Representar</span>
<svg class="globe" viewBox="0 0 15 15"><path d="M7.500 0L15 7l-7.500 7L0 7z" fill="#999"/><circle cx="7.500" cy="7" r="5.800" fill="#777"/><path d="M2 7h11M7.500 1v12M4 3c-1 3-1 5 0 8M11 3c1 3 1 5 0 8M3 4h9M3 10h9" fill="none" stroke="#ccc" stroke-width=".6"/></svg>
<span class="t epsg">EPSG:4326</span>
<svg class="chat" viewBox="0 0 16 16"><path d="M8 1c10 0 10 11 2 11l1 3-4-3C-2 12-2 1 8 1z" fill="#5a5a5a"/><path d="M4 6.500h2M7.200 6.500h2M10.400 6.500h2" stroke="#fff" stroke-width="1.800"/></svg>
</footer>
</body>
</html>
```
FILE: styles.css
```css
* { box-sizing: border-box; }
body { margin: 0; width: 1915px; height: 1035px; overflow: hidden; display: flex; flex-direction: column; background: #efefef; color: #000; font: 12px/16px "Open Sans", "Noto Sans", sans-serif; letter-spacing: -.28px; white-space: nowrap; }
.defs { position: absolute; visibility: hidden; }
svg { flex: none; display: block; }
i, b, em { display: block; flex: none; font-style: normal; }
.i16 { width: 16px; height: 16px; }

.titlebar { height: 22px; flex: none; background: #fff; display: flex; align-items: center; }
.titlebar .i16 { margin-left: -1px; }
.title { margin-left: 5px; letter-spacing: -.28px; }
.winctl { width: 103px; height: 12px; margin: -4px 16px 0 auto; }
.menubar { height: 20px; flex: none; border-bottom: 1px solid #d0d0d0; padding-left: 7px; display: flex; gap: 14px; align-items: center; letter-spacing: -.39px; }
.menubar u { text-underline-offset: 2px; text-decoration-thickness: 1px; }

.toolbar { height: 39px; flex: none; display: flex; align-items: center; background: linear-gradient(#fafafa, #ededed); border-bottom: 1px solid #b4b4b4; }
.toolbar b { width: 33px; height: 33px; display: flex; align-items: center; justify-content: center; }
.toolbar b svg { width: 24px; height: 24px; overflow: visible; }
.toolbar .on { width: 32px; height: 31px; border: 1px solid #a9a9a9; border-radius: 3px; background: #dcdcdc; margin-right: 1px; }
.off svg { opacity: .3; }
.gray svg { filter: grayscale(.8); }
.flip svg { transform: scaleX(-1); }
.warm svg { filter: sepia(.5); }
.grip { width: 16px; height: 18px; padding-right: 4px; display: flex; justify-content: flex-end; }
.edit .grip { width: 16.4px; }
.grip::after { content: ""; width: 5px; height: 18px; background: radial-gradient(circle, #aaa 35%, transparent 45%) 0 0 / 3px 3px; }
.toolbar .grip.first { width: 9.5px; }
.sep { width: 6px; height: 19px; background: linear-gradient(#ccc, #ccc) 3px 0 / 1px 100% no-repeat; }
.drop { width: 11.8px; display: flex; justify-content: center; }
.drop::after { content: ""; border: 4px solid transparent; border-top-color: #555; border-bottom: 0; }
.dim { opacity: .55; }

.work { flex: 1; min-height: 0; display: flex; }
.left { width: 278px; flex: none; display: flex; flex-direction: column; }
.dockhead { height: 20px; flex: none; display: flex; align-items: center; padding: 0 2px 0 1px; }
.dockhead span { margin-right: auto; letter-spacing: -.25px; }
.dockhead svg { width: 11px; height: 11px; margin-left: 3px; }
.docktools { height: 30px; flex: none; display: flex; align-items: center; gap: 9px; padding: 0 0 3px 5px; }
.browser { height: 339px; flex: none; display: grid; grid-template: 323px 14px / 263px 14px; border: solid #b4b4b4; border-width: 1px 1px 1px 0; background: #fff; overflow: hidden; }
.rows { overflow: hidden; }
.row { height: 18px; display: flex; align-items: center; padding-left: 4px; }
.row span { margin-left: 6px; }
.l1 { padding-left: 24px; }
.l2 { padding-left: 44px; }
.cur { background: #efefef; }
.row .path { letter-spacing: -.36px; }
.arr { width: 17px; display: flex; align-items: center; }
.arr::after { content: ""; border: 4px solid transparent; border-left: 4px solid #666; border-right: 0; margin-left: 2px; }
.arr.down::after { border: 4px solid transparent; border-top: 4px solid #555; border-bottom: 0; margin-left: 0; }
.arr.none { visibility: hidden; }
.vbar { border-left: 1px solid #b4b4b4; display: flex; flex-direction: column; background: #e4e4e4; }
.btn { background: #fafafa; display: flex; align-items: center; justify-content: center; }
.vbar .btn { height: 13px; border-bottom: 1px solid #b4b4b4; }
.vbar .btn:last-child { border: 0; border-top: 1px solid #b4b4b4; height: 14px; }
.vbar .thumb { height: 194px; background: linear-gradient(90deg, #fff, #f0f0f0); border-bottom: 1px solid #b4b4b4; }
.vbar .trough { flex: 1; }
.hbar { border-top: 1px solid #b4b4b4; display: flex; background: #e4e4e4; }
.hbar .btn { width: 11px; }
.hbar .btn:last-child { width: 14px; border-left: 1px solid #b4b4b4; }
.hbar .thumb { width: 211px; background: linear-gradient(#fff, #eee); border: solid #b4b4b4; border-width: 0 1px; }
.hbar .trough { flex: 1; }
.corner { border: solid #b4b4b4; border-width: 1px 0 0 1px; background: #efefef; }
.tri { border: 4px solid transparent; width: 0; height: 0; }
.tri.up { border-bottom-color: #555; border-top: 0; }
.tri.down { border-top-color: #555; border-bottom: 0; }
.tri.left { border-right-color: #555; border-left: 0; }
.tri.right { border-left-color: #555; border-right: 0; }
.split { height: 5px; flex: none; display: flex; justify-content: center; align-items: center; }
.split i { width: 17px; height: 1px; background: repeating-linear-gradient(90deg, #aaa 0 1px, transparent 1px 3px); }
.docktools.second { height: 31px; padding: 0 0 3px 5px; }
.docktools .drop { width: 8px; margin-left: -4px; }
.second .drop { margin-right: -1.5px; }
.faint { opacity: .35; }
.layers { flex: 1; background: #fff; border: 1px solid #b4b4b4; border-left: 0; }
.layer { height: 18px; display: flex; align-items: center; padding-left: 21px; }
.chk { width: 14px; height: 14px; }
.swatch { width: 16px; height: 16px; margin: 0 3px 0 6px; background: #9fd7af; border: 1px solid #555; }
.layer span { flex: 1; height: 18px; line-height: 16px; padding-left: 2px; font-weight: 700; letter-spacing: -.4px; text-decoration: underline; border: 1px solid #b5d7ef; background: linear-gradient(#f8fcff, #e6f3fd); }

.vsplit { width: 6px; flex: none; display: flex; align-items: center; justify-content: center; }
.vsplit i { width: 1px; height: 17px; background: repeating-linear-gradient(#aaa 0 1px, transparent 1px 3px); }
.canvas { width: 1162px; flex: none; background: #fff; border: 1px solid #b4b4b4; }
.canvas svg { width: 1160px; height: 889px; }
.right { flex: 1; min-width: 0; padding-left: 6px; display: flex; flex-direction: column; }
.right .dockhead { padding: 0 0 0 4px; }
.right .docktools { padding-left: 8px; }
.tsep { width: 1px; height: 12px; background: #d5d5d5; margin: 0 -1.5px; }
.right .docktools .drop { margin-left: -3px; }
.results { height: 776px; flex: none; border: 1px solid #b4b4b4; border-right: 0; background: #fff; }
.cols { height: 19px; display: flex; align-items: center; border-bottom: 1px solid #b4b4b4; background: linear-gradient(#fff, #efefef); }
.cols span { line-height: 18px; padding-left: 2px; width: 100px; border-right: 1px solid #c4c4c4; }
.cols span:last-child { border: 0; }
.opts { height: 22px; margin-top: 5px; flex: none; display: flex; align-items: center; padding-left: 5px; font-size: 11.5px; letter-spacing: -.4px; }
.opts.two { margin-top: 8px; }
.combo { height: 22px; flex: none; border: 1px solid #aaa; border-radius: 3px; background: linear-gradient(#fff, #efefef); display: flex; align-items: center; padding: 0 6px 0 4px; }
.combo i { margin-left: auto; border: 4px solid transparent; border-top-color: #555; border-bottom: 0; }
.opts label { width: 32px; flex: none; }
.opts.two label { width: 22px; }
.mode { width: 233px; }
.view { width: 72px; }
.box { width: 14px; height: 14px; border: 1px solid #b5b5b5; background: #fff; margin-left: 66px; }
.auto { margin-left: 5px; letter-spacing: -.48px; }
.opts button { margin: 0 3px 0 auto; width: 45px; height: 20px; padding: 0; border: 1px solid #aaa; border-radius: 3px; background: linear-gradient(#fff, #efefef); font: inherit; letter-spacing: inherit; }

.status { height: 24px; flex: none; display: flex; align-items: center; }
.field { height: 24px; margin-top: 4px; flex: none; border: 1px solid #aaa; border-radius: 3px; background: #fff; display: flex; align-items: center; padding-left: 4px; }
.field > i { margin-left: auto; height: 100%; border-left: 1px solid #bbb; display: flex; flex-direction: column; gap: 4px; align-items: center; justify-content: center; background: #f6f6f6; }
.t { flex: none; font-size: 11.5px; letter-spacing: -.5px; padding-top: 1px; }
.locate { width: 255px; margin-left: 1px; color: #777; padding-left: 8px; font-size: 11.5px; letter-spacing: -.4px; }
.locate svg { width: 12px; height: 12px; margin-right: 7px; }
.coord { margin-left: 816px; width: 63px; }
.fcoord { width: 92px; padding-left: 6px; }
.mouse { margin-left: 4px; }
.esc { margin-left: 12px; width: 34px; }
.fesc { width: 81px; }
.fesc i { width: 21px; }
.lock { width: 13px; height: 16px; margin-left: 12px; }
.amp { margin-left: 7px; width: 62px; }
.famp { width: 87px; }
.famp i, .frot i { width: 14px; }
.rot { margin-left: 9px; width: 52px; }
.frot { width: 84px; }
.rchk { margin-left: 6px; }
.rep { margin-left: 4px; width: 79px; }
.globe { width: 15px; height: 15px; }
.epsg { margin-left: 3px; width: 75px; }
.chat { width: 16px; height: 16px; }
```
